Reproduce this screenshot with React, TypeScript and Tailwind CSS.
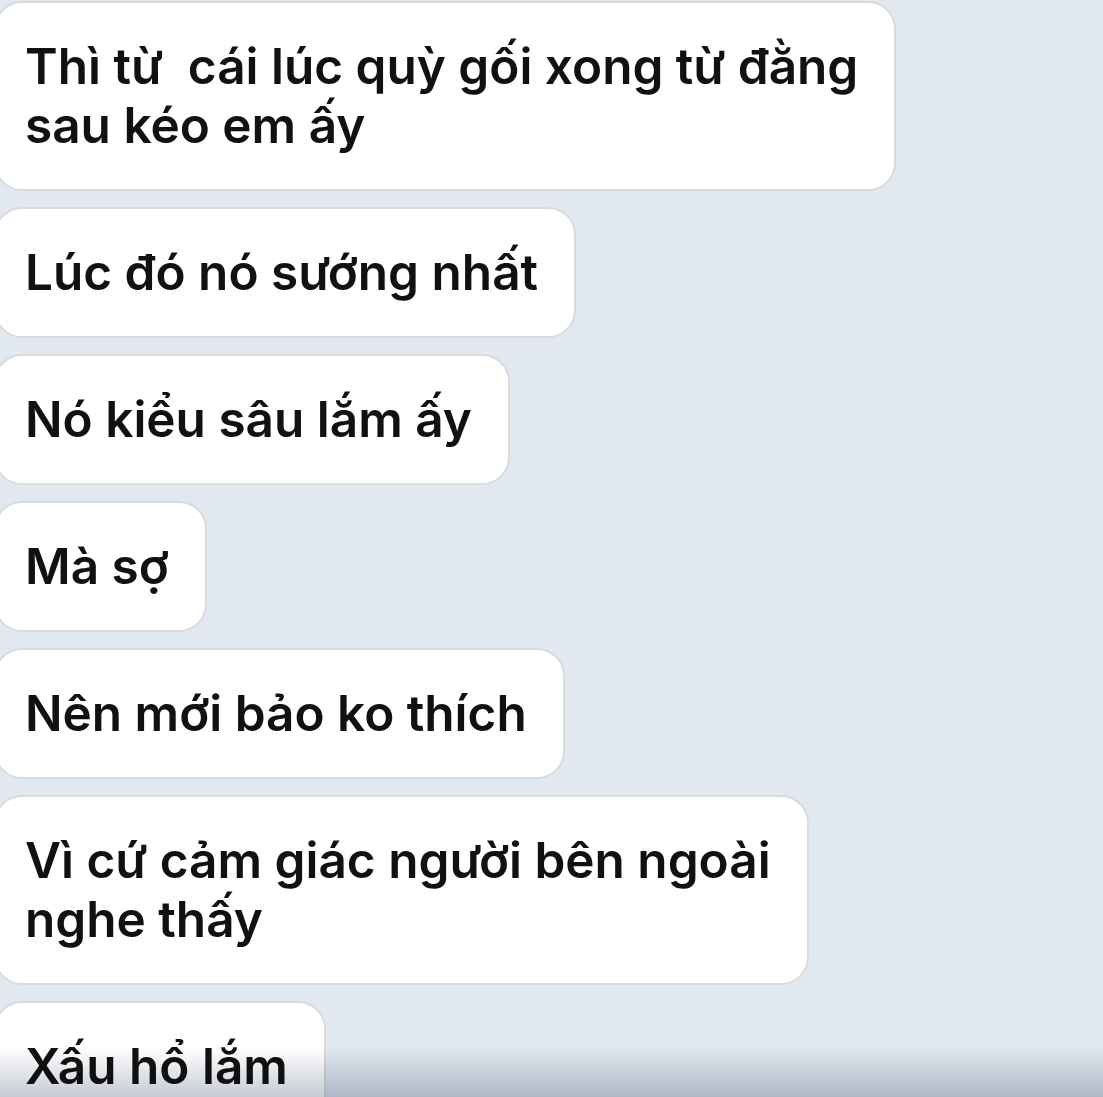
const messages: string[][] = [
  ["Thì từ  cái lúc quỳ gối xong từ đằng", "sau kéo em ấy"],
  ["Lúc đó nó sướng nhất"],
  ["Nó kiểu sâu lắm ấy"],
  ["Mà sợ"],
  ["Nên mới bảo ko thích"],
  ["Vì cứ cảm giác người bên ngoài", "nghe thấy"],
  ["Xấu hổ lắm"],
];

const Bubble = ({ lines }: { lines: string[] }) => {
  return (
    <div className="w-fit -ml-[6px] bg-white border-2 border-[#d9dbde] rounded-[28px] pl-[29px] pr-[36px] py-[34px]">
      {lines.map((line, i) => (
        <p key={i} className="whitespace-pre leading-[59px] text-[49.5px] font-semibold text-[#111111]">
          {line}
        </p>
      ))}
    </div>
  );
};

export default function App() {
  return (
    <div
      className="relative h-[1097px] w-full overflow-hidden bg-[#e1e8f0]"
      style={{ fontFamily: "Inter, 'Noto Sans', sans-serif" }}
    >
      <div className="flex flex-col gap-[16px] pt-[1px]">
        {messages.map((lines, i) => (
          <Bubble key={i} lines={lines} />
        ))}
      </div>
      <div className="pointer-events-none absolute bottom-0 left-0 right-0 h-[50px] bg-gradient-to-b from-transparent to-[#c6cbd3] mix-blend-multiply" />
    </div>
  );
}
